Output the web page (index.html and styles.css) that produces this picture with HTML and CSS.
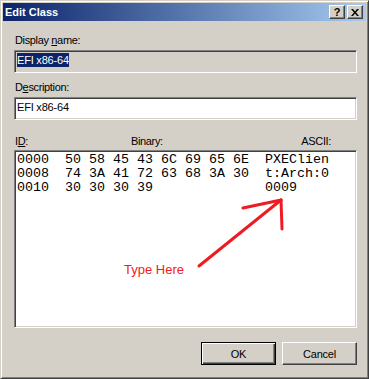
FILE: index.html
```html
<!DOCTYPE html>
<html>
<head>
<meta charset="utf-8">
<link rel="stylesheet" href="styles.css">
</head>
<body>
<div class="window">
  <div class="titlebar">
    <span class="title">Edit Class</span>
    <div class="caption-btns">
      <div class="cbtn help">?</div>
      <div class="cbtn close">
        <svg width="8" height="7" viewBox="0 0 8 7"><path d="M0 0h2l2 2.5L6 0h2L5 3.5 8 7H6L4 4.5 2 7H0l3-3.5z" fill="#000"/></svg>
      </div>
    </div>
  </div>
  <div class="content">
    <div class="lbl">Display <u>n</u>ame:</div>
    <div class="field readonly"><span class="sel">EFI x86-64</span></div>
    <div class="lbl lbl-gap">D<u>e</u>scription:</div>
    <div class="field">EFI x86-64</div>
    <div class="hexhead"><span>I<u>D</u>:</span><span>Binary:</span><span>ASCII:</span></div>
    <div class="hexbox"><pre class="hex">0000  50 58 45 43 6C 69 65 6E  PXEClien
0008  74 3A 41 72 63 68 3A 30  t:Arch:0
0010  30 30 30 39              0009</pre></div>
    <div class="buttons">
      <div class="btn default">OK</div>
      <div class="btn">Cancel</div>
    </div>
  </div>
  <svg class="annot" width="369" height="379" viewBox="0 0 369 379">
    <g stroke="#ED1C24" stroke-width="3" stroke-linecap="round" fill="none">
      <path d="M199 266 L281 200"/>
      <path d="M243 208 L281 200"/>
      <path d="M281 200 L282 229"/>
    </g>
  </svg>
  <span class="typehere">Type Here</span>
</div>
</body>
</html>
```
FILE: styles.css
```css
body {
  margin: 0;
}

.window {
  position: relative;
  width: 369px;
  height: 379px;
  box-sizing: border-box;
  background: #D4D0C8;
  border: 1px solid;
  border-color: #D4D0C8 #404040 #404040 #D4D0C8;
  box-shadow: inset 1px 1px #fff, inset -1px -1px #808080;
  padding: 2px;
  display: flex;
  flex-direction: column;
  font-family: "Liberation Sans", Arial, sans-serif;
  font-size: 11px;
  color: #000;
}

.titlebar {
  height: 18px;
  flex: none;
  background: linear-gradient(to right, #0A246A, #A6CAF0);
  display: flex;
  align-items: center;
  justify-content: space-between;
  padding: 0 3px 0 2px;
}

.title {
  color: #fff;
  font-weight: bold;
  font-size: 11px;
  line-height: 13px;
}

.caption-btns {
  display: flex;
  gap: 2px;
}

.cbtn {
  width: 16px;
  height: 14px;
  box-sizing: border-box;
  background: #D4D0C8;
  border: 1px solid;
  border-color: #fff #404040 #404040 #fff;
  box-shadow: inset -1px -1px #808080;
  display: flex;
  align-items: center;
  justify-content: center;
  font-weight: bold;
  font-size: 11px;
  line-height: 12px;
}

.cbtn.close svg {
  display: block;
  margin-left: -1px;
}

.content {
  flex: 1;
  display: flex;
  flex-direction: column;
  padding: 13px 9px 0 11px;
}

.lbl {
  height: 13px;
  line-height: 13px;
  letter-spacing: -0.35px;
  padding-left: 1px;
}

.lbl-gap {
  margin-top: 8px;
}

.field {
  margin-top: 3px;
  height: 23px;
  box-sizing: border-box;
  border: 1px solid;
  border-color: #808080 #fff #fff #808080;
  box-shadow: inset 1px 1px #404040, inset -1px -1px #D4D0C8;
  background: #fff;
  padding: 2px 2px 0;
  line-height: 14px;
  letter-spacing: -0.2px;
}

.field.readonly {
  background: #D4D0C8;
}

.sel {
  background: #0A246A;
  color: #fff;
  display: inline-block;
  height: 14px;
}

.hexhead {
  margin-top: 15px;
  height: 13px;
  line-height: 13px;
  display: grid;
  grid-template-columns: 116px 1fr auto;
  padding: 0 26px 0 1px;
  letter-spacing: -0.35px;
}

.hexbox {
  margin-top: 2px;
  height: 178px;
  box-sizing: border-box;
  border: 1px solid;
  border-color: #808080 #fff #fff #808080;
  box-shadow: inset 1px 1px #404040, inset -1px -1px #D4D0C8;
  background: #fff;
  padding: 2px 0 0 2px;
}

.hex {
  margin: 0;
  font-family: "Liberation Mono", "Courier New", monospace;
  font-size: 13.33px;
  line-height: 14px;
  color: #000;
}

.buttons {
  margin-top: 14px;
  display: flex;
  justify-content: flex-end;
  gap: 6px;
}

.btn {
  width: 75px;
  height: 23px;
  box-sizing: border-box;
  border: 1px solid;
  border-color: #fff #404040 #404040 #fff;
  box-shadow: inset -1px -1px #808080;
  display: flex;
  align-items: center;
  justify-content: center;
  letter-spacing: -0.2px;
}

.btn.default {
  border-color: #000;
  box-shadow: inset 1px 1px #fff, inset -1px -1px #404040, inset -2px -2px #808080;
}

.annot {
  position: absolute;
  top: -1px;
  left: -1px;
  pointer-events: none;
}

.typehere {
  position: absolute;
  left: 123px;
  top: 261px;
  color: #ED1C24;
  font-family: "Liberation Sans", Arial, sans-serif;
  font-size: 13px;
  line-height: 15px;
}
```
